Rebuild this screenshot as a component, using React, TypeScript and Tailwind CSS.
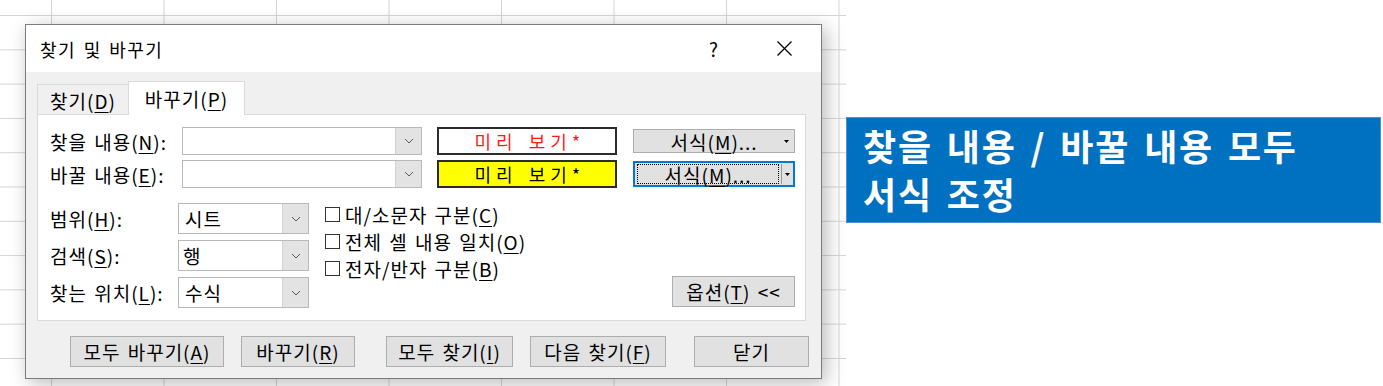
import React from "react";

const U = ({ c }: { c: string }) => (
  <span className="underline underline-offset-[3px] decoration-1">{c}</span>
);

function Chevron() {
  return (
    <svg width="10" height="6" viewBox="0 0 10 6">
      <polyline points="1,1 5,5 9,1" fill="none" stroke="#5a5a5a" strokeWidth="1" />
    </svg>
  );
}

function Arrow() {
  return (
    <svg width="5" height="3" viewBox="0 0 5 3">
      <polygon points="0,0 5,0 2.5,3" fill="#000" />
    </svg>
  );
}

function Combo({ cls, text, pl }: { cls: string; text?: React.ReactNode; pl?: string }) {
  return (
    <div className={`flex border border-[#b9b9b9] bg-white ${cls}`}>
      <div className={`flex-1 flex items-center ${pl ?? "pl-[6px]"}`}>{text}</div>
      <div className="w-[26px] bg-[#e3e3e3] border-l border-[#d2d2d2] flex items-center justify-center">
        <Chevron />
      </div>
    </div>
  );
}

function Check({ children }: { children: React.ReactNode }) {
  return (
    <div className="h-[27px] flex items-center">
      <div className="w-[15px] h-[15px] border border-[#333] bg-white shrink-0" />
      <div className="ml-[5px] whitespace-nowrap">{children}</div>
    </div>
  );
}

function Btn({ cls, children }: { cls: string; children: React.ReactNode }) {
  return (
    <div className={`h-[31px] bg-[#e1e1e1] border border-[#adadad] flex items-center justify-center whitespace-nowrap ${cls}`}>
      {children}
    </div>
  );
}

function Dialog() {
  return (
    <div className="w-[797px] h-[355px] border border-[#7c7c7c] bg-[#f0f0f0] flex flex-col shadow-[4px_4px_18px_rgba(0,0,0,0.28)]">
      {/* Title bar */}
      <div className="h-[47px] bg-white flex items-center justify-between pl-[14px] pr-[29px]">
        <div className="text-[18px] tracking-[1.5px]">찾기 및 바꾸기</div>
        <div className="flex items-center">
          <div className="text-[19px] mr-[58px]">?</div>
          <svg width="15" height="15" viewBox="0 0 15 15">
            <line x1="0.5" y1="0.5" x2="14.5" y2="14.5" stroke="#000" strokeWidth="1.3" />
            <line x1="14.5" y1="0.5" x2="0.5" y2="14.5" stroke="#000" strokeWidth="1.3" />
          </svg>
        </div>
      </div>
      {/* Body */}
      <div className="flex-1 px-[11px] pt-[9px]">
        {/* tabs */}
        <div className="flex items-end h-[33px]">
          <div className="w-[91px] h-[30px] border-t border-l border-[#dadada] flex items-center justify-center pt-[2px]">
            찾기(<U c="D" />)
          </div>
          <div className="w-[117px] h-[34px] mb-[-1px] relative bg-white border-t border-l border-r border-[#dadada] flex items-center justify-center">
            바꾸기(<U c="P" />)
          </div>
        </div>
        {/* panel */}
        <div className="w-[769px] h-[207px] bg-white border border-[#dadada] pl-[12px] pr-[10px] pt-[12px] flex flex-col">
          <div className="flex items-center h-[28px]">
            <div className="w-[132px] whitespace-nowrap">
              찾을 내용(<U c="N" />):
            </div>
            <Combo cls="w-[241px] h-[28px]" />
            <div className="ml-[15px] w-[180px] h-[28px] border-2 border-[#2b2b2b] bg-white flex items-center justify-center pl-[5px] text-[#ff1a1a] text-[18px] tracking-[5px]">
              미리 보기*
            </div>
            <div className="ml-[16px] w-[162px] h-[24px] bg-[#e1e1e1] border border-[#adadad] flex items-center">
              <div className="w-[14px]" />
              <div className="flex-1 text-center whitespace-nowrap">
                서식(<U c="M" />)...
              </div>
              <div className="w-[14px] flex items-center justify-center">
                <Arrow />
              </div>
            </div>
          </div>
          <div className="flex items-center h-[28px] mt-[5px]">
            <div className="w-[132px] whitespace-nowrap">
              바꿀 내용(<U c="E" />):
            </div>
            <Combo cls="w-[241px] h-[28px]" />
            <div className="ml-[15px] w-[180px] h-[28px] border-2 border-[#2b2b2b] bg-[#ffff00] flex items-center justify-center pl-[5px] text-black text-[18px] tracking-[5px]">
              미리 보기*
            </div>
            <div className="ml-[16px] w-[162px] h-[26px] bg-[#e1e1e1] border-2 border-[#0078d7] flex items-center pl-[2px] py-[1px]">
              <div className="flex-1 h-full border border-dotted border-black flex items-center justify-center whitespace-nowrap">
                서식(<U c="M" />)...
              </div>
              <div className="w-px h-full bg-[#9a9a9a] ml-[2px]" />
              <div className="w-[11px] flex items-center justify-center">
                <Arrow />
              </div>
            </div>
          </div>
          {/* options */}
          <div className="flex mt-[13px]">
            <div className="flex flex-col pt-[2px] gap-[6px]">
              <div className="flex items-center">
                <div className="w-[128px] whitespace-nowrap">
                  범위(<U c="H" />):
                </div>
                <Combo cls="w-[131px] h-[31px]" text="시트" />
              </div>
              <div className="flex items-center">
                <div className="w-[128px] whitespace-nowrap">
                  검색(<U c="S" />):
                </div>
                <Combo cls="w-[131px] h-[31px]" text="행" pl="pl-[4px]" />
              </div>
              <div className="flex items-center">
                <div className="w-[128px] whitespace-nowrap">
                  찾는 위치(<U c="L" />):
                </div>
                <Combo cls="w-[131px] h-[31px]" text="수식" />
              </div>
            </div>
            <div className="ml-[16px] flex flex-col">
              <Check>
                대/소문자 구분(<U c="C" />)
              </Check>
              <Check>
                전체 셀 내용 일치(<U c="O" />)
              </Check>
              <Check>
                전자/반자 구분(<U c="B" />)
              </Check>
            </div>
            <div className="flex-1 flex justify-end items-end">
              <Btn cls="w-[123px] h-[30px] mb-[1px]">
                옵션(<U c="T" />) &lt;&lt;
              </Btn>
            </div>
          </div>
        </div>
        {/* bottom buttons */}
        <div className="flex mt-[15px] pl-[33px]">
          <Btn cls="w-[154px]">
            모두 바꾸기(<U c="A" />)
          </Btn>
          <Btn cls="w-[114px] ml-[17px]">
            바꾸기(<U c="R" />)
          </Btn>
          <Btn cls="w-[127px] ml-[31px]">
            모두 찾기(<U c="I" />)
          </Btn>
          <Btn cls="w-[136px] ml-[17px]">
            다음 찾기(<U c="F" />)
          </Btn>
          <Btn cls="w-[115px] ml-[28px]">닫기</Btn>
        </div>
      </div>
    </div>
  );
}

export default function App() {
  return (
    <div className="w-[1383px] h-[386px] bg-white flex overflow-hidden font-['Noto_Sans_CJK_KR',sans-serif] text-[19px] tracking-[1px] [word-spacing:2px] text-black leading-none">
      <div className="w-[846px] h-full shrink-0 pl-[25px] pt-[24px] bg-[linear-gradient(to_right,#d4d4d4_1px,transparent_1px),linear-gradient(to_bottom,#d4d4d4_1px,transparent_1px)] bg-[size:112.5px_34.3px] bg-[position:51px_15px]">
        <Dialog />
      </div>
      <div className="pt-[117px]">
        <div className="w-[535px] h-[106px] bg-[#0070c0] border border-[#4f8fcf] pl-[16px] pt-[4px] text-white font-bold text-[36px] tracking-[1.8px] [word-spacing:4px] leading-[48px] whitespace-nowrap">
          <div className="h-[46px] leading-[46px]">찾을 내용 / 바꿀 내용 모두</div>
          <div className="h-[46px] leading-[46px] mt-[2px]">서식 조정</div>
        </div>
      </div>
    </div>
  );
}
